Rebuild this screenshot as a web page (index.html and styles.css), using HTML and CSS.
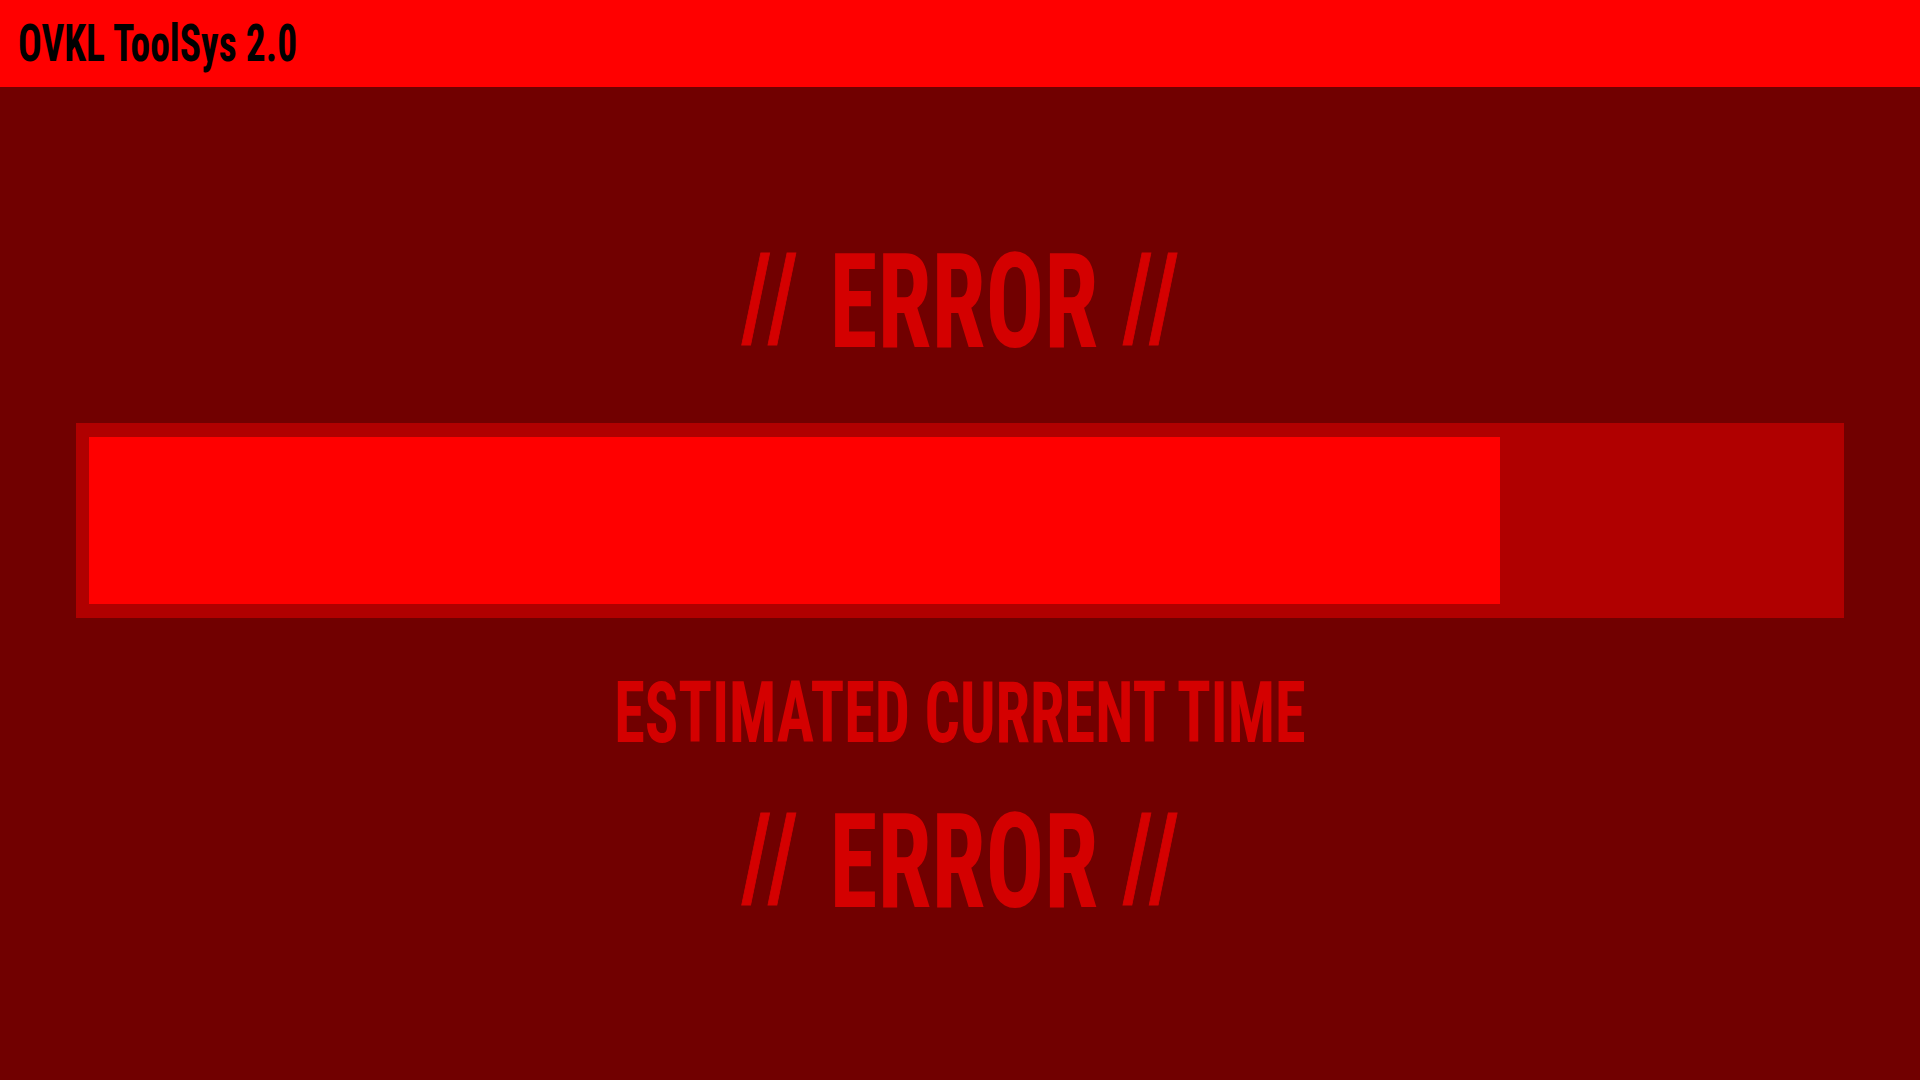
FILE: index.html
```html
<!DOCTYPE html>
<html lang="en">
<head>
<meta charset="utf-8">
<title>OVKL ToolSys 2.0</title>
<link rel="stylesheet" href="styles.css">
</head>
<body>
<header class="topbar">
  <span class="brand">OVKL ToolSys 2.0</span>
</header>
<main class="screen">
  <div class="error-line"><span class="cond"><span class="sl">//</span> ERROR <span class="sl">//</span></span></div>
  <div class="progress">
    <div class="progress-fill" style="width: 81.05%"></div>
  </div>
  <div class="label"><span class="cond-label">ESTIMATED CURRENT TIME</span></div>
  <div class="error-line error-bottom"><span class="cond"><span class="sl">//</span> ERROR <span class="sl">//</span></span></div>
</main>
</body>
</html>
```
FILE: styles.css
```css
html, body {
  margin: 0;
  padding: 0;
  height: 100%;
}
body {
  background: #710000;
  font-family: "Roboto Condensed", "Roboto", sans-serif;
  font-weight: 700;
  overflow: hidden;
}
.topbar {
  height: 87px;
  background: #ff0000;
  display: flex;
  align-items: flex-start;
  padding-left: 18px;
}
.brand {
  display: inline-block;
  font-size: 52px;
  line-height: 87px;
  color: #000;
  white-space: nowrap;
  transform: scaleX(0.76);
  transform-origin: left center;
}
.screen {
  display: flex;
  flex-direction: column;
  align-items: center;
  padding: 150px 76px 0;
}
.error-line {
  font-size: 131px;
  line-height: 131px;
  height: 131px;
  color: #d40000;
  text-align: center;
  white-space: nowrap;
}
.cond {
  display: inline-block;
  transform: scaleX(0.745);
  word-spacing: 3px;
}
.sl {
  display: inline-block;
  font-size: 119px;
  letter-spacing: 10px;
  -webkit-text-stroke: 1px #d40000;
  transform: translateY(-9px);
}
.sl:last-child {
  margin-right: -10px;
}
.progress {
  align-self: stretch;
  margin-top: 55px;
  height: 167px;
  padding: 14px 14px 14px 13px;
  background: #b00000;
  display: flex;
}
.progress-fill {
  background: #ff0000;
  height: 100%;
}
.label {
  margin-top: 52px;
  font-size: 86px;
  line-height: 86px;
  height: 86px;
  color: #d40000;
  white-space: nowrap;
}
.cond-label {
  display: inline-block;
  transform: scaleX(0.725);
}
.error-bottom {
  margin-top: 41px;
}
```
